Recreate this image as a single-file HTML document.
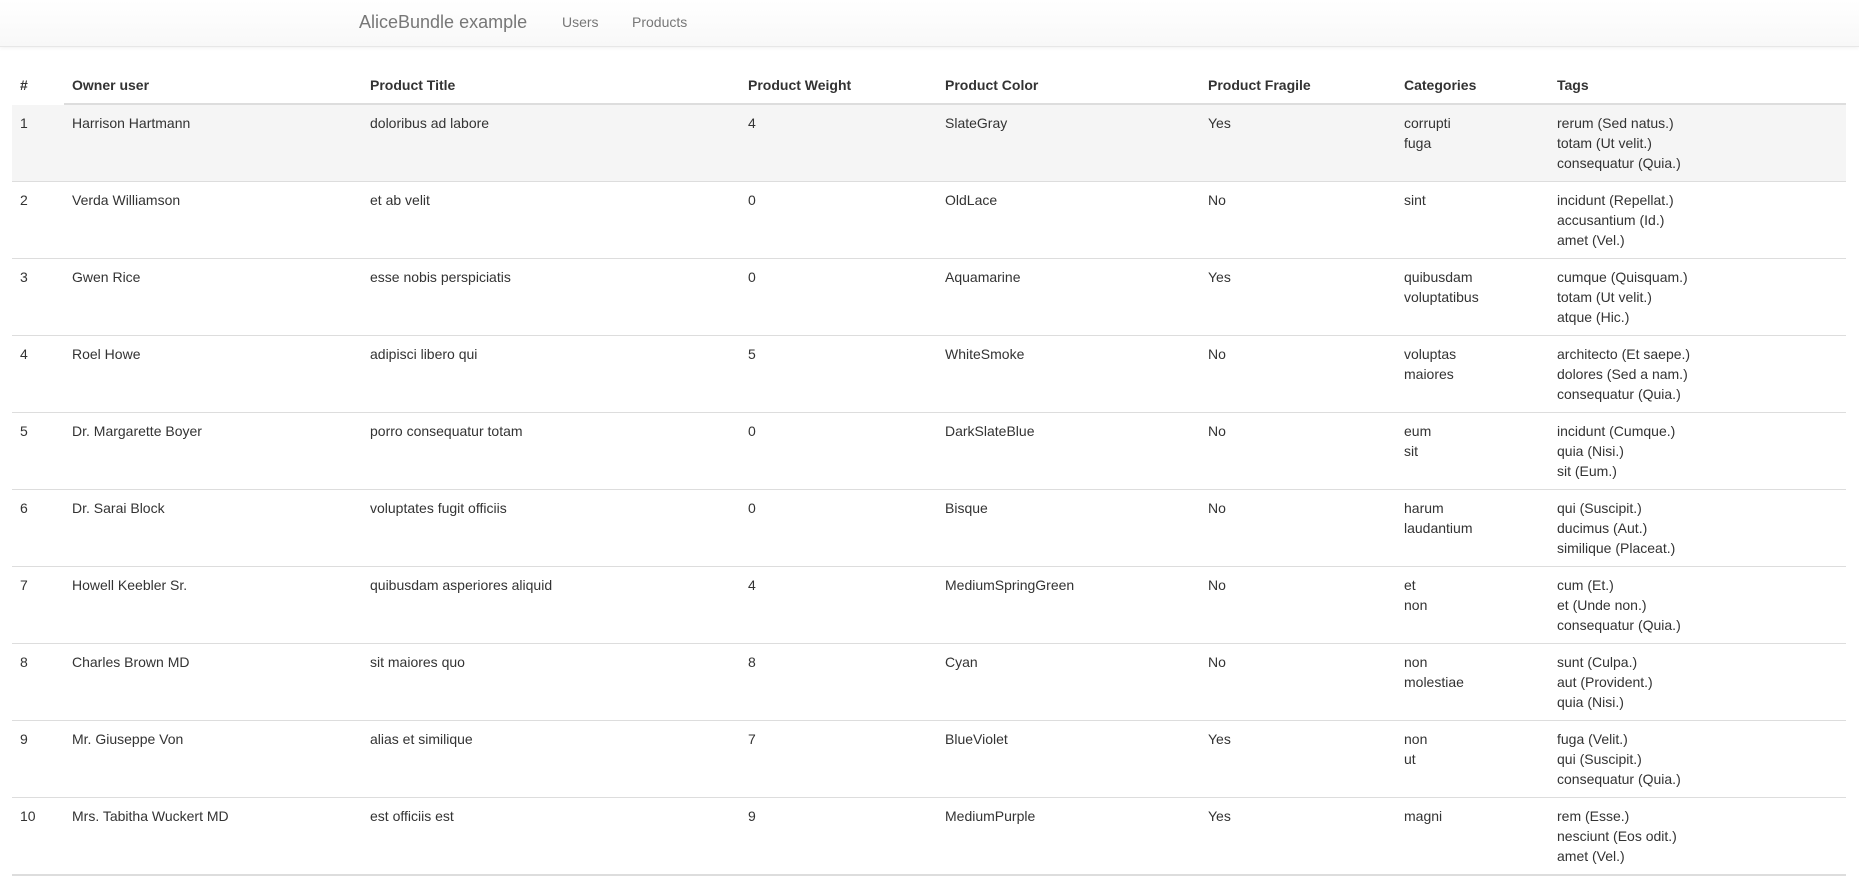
<!DOCTYPE html>
<html><head><meta charset="utf-8"><style>
*{box-sizing:border-box}
body{margin:0;background:#fff;font-family:"Liberation Sans",Arial,sans-serif;font-size:14px;line-height:20px;color:#333;width:1859px;height:877px;overflow:hidden}
.nav{height:47px;background:linear-gradient(#fff,#f8f8f8);border-bottom:1px solid #e7e7e7;box-shadow:0 1px 4px rgba(0,0,0,.06);position:relative}
.nav a{position:absolute;color:#777;text-decoration:none}
.brand{left:359px;top:11px;font-size:18px;line-height:22px}
.l1{left:562px;top:12px;font-size:14px}
.l2{left:632px;top:12px;font-size:14px}
table{position:absolute;left:12px;top:67px;width:1834px;border-collapse:collapse;table-layout:fixed;border-bottom:2px solid #ddd}
th,td{padding:8px;text-align:left;vertical-align:top}
th{font-weight:bold;border-bottom:2px solid #ddd}
th:first-child{border-bottom:2px solid #fff}
td{border-top:1px solid #ddd;height:77px}
tbody tr:first-child td{background:#f5f5f5;border-top:0}
</style></head><body>
<div class="nav"><a class="brand">AliceBundle example</a><a class="l1">Users</a><a class="l2">Products</a></div>
<table>
<colgroup><col style="width:52px"><col style="width:298px"><col style="width:378px"><col style="width:197px"><col style="width:263px"><col style="width:196px"><col style="width:153px"><col></colgroup>
<thead><tr><th>#</th><th>Owner user</th><th>Product Title</th><th>Product Weight</th><th>Product Color</th><th>Product Fragile</th><th>Categories</th><th>Tags</th></tr></thead>
<tbody>
<tr><td>1</td><td>Harrison Hartmann</td><td>doloribus ad labore</td><td>4</td><td>SlateGray</td><td>Yes</td><td>corrupti<br>fuga</td><td>rerum (Sed natus.)<br>totam (Ut velit.)<br>consequatur (Quia.)</td></tr>
<tr><td>2</td><td>Verda Williamson</td><td>et ab velit</td><td>0</td><td>OldLace</td><td>No</td><td>sint</td><td>incidunt (Repellat.)<br>accusantium (Id.)<br>amet (Vel.)</td></tr>
<tr><td>3</td><td>Gwen Rice</td><td>esse nobis perspiciatis</td><td>0</td><td>Aquamarine</td><td>Yes</td><td>quibusdam<br>voluptatibus</td><td>cumque (Quisquam.)<br>totam (Ut velit.)<br>atque (Hic.)</td></tr>
<tr><td>4</td><td>Roel Howe</td><td>adipisci libero qui</td><td>5</td><td>WhiteSmoke</td><td>No</td><td>voluptas<br>maiores</td><td>architecto (Et saepe.)<br>dolores (Sed a nam.)<br>consequatur (Quia.)</td></tr>
<tr><td>5</td><td>Dr. Margarette Boyer</td><td>porro consequatur totam</td><td>0</td><td>DarkSlateBlue</td><td>No</td><td>eum<br>sit</td><td>incidunt (Cumque.)<br>quia (Nisi.)<br>sit (Eum.)</td></tr>
<tr><td>6</td><td>Dr. Sarai Block</td><td>voluptates fugit officiis</td><td>0</td><td>Bisque</td><td>No</td><td>harum<br>laudantium</td><td>qui (Suscipit.)<br>ducimus (Aut.)<br>similique (Placeat.)</td></tr>
<tr><td>7</td><td>Howell Keebler Sr.</td><td>quibusdam asperiores aliquid</td><td>4</td><td>MediumSpringGreen</td><td>No</td><td>et<br>non</td><td>cum (Et.)<br>et (Unde non.)<br>consequatur (Quia.)</td></tr>
<tr><td>8</td><td>Charles Brown MD</td><td>sit maiores quo</td><td>8</td><td>Cyan</td><td>No</td><td>non<br>molestiae</td><td>sunt (Culpa.)<br>aut (Provident.)<br>quia (Nisi.)</td></tr>
<tr><td>9</td><td>Mr. Giuseppe Von</td><td>alias et similique</td><td>7</td><td>BlueViolet</td><td>Yes</td><td>non<br>ut</td><td>fuga (Velit.)<br>qui (Suscipit.)<br>consequatur (Quia.)</td></tr>
<tr><td>10</td><td>Mrs. Tabitha Wuckert MD</td><td>est officiis est</td><td>9</td><td>MediumPurple</td><td>Yes</td><td>magni</td><td>rem (Esse.)<br>nesciunt (Eos odit.)<br>amet (Vel.)</td></tr>
</tbody></table>
</body></html>
